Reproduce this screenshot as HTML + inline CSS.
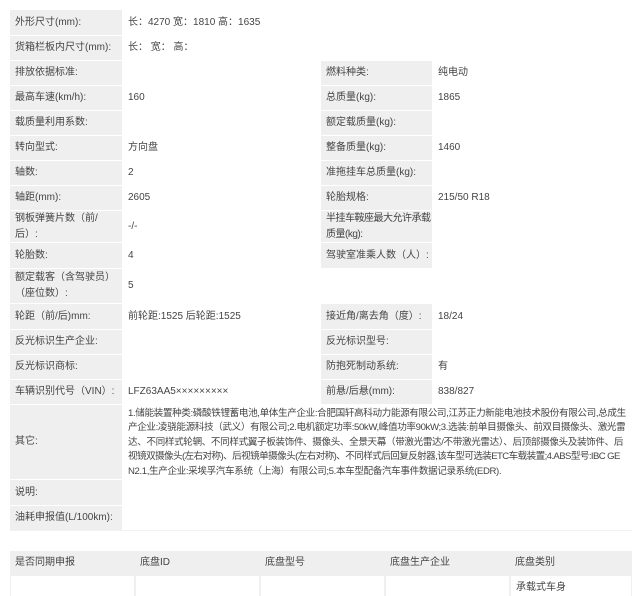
<!DOCTYPE html>
<html><head><meta charset="utf-8"><style>
html,body{margin:0;padding:0;background:#fff;width:640px;height:596px;overflow:hidden}
body{position:relative;font-family:"Liberation Sans","Noto Sans CJK SC",sans-serif;font-size:10px;color:#444}
.c{position:absolute;display:flex;align-items:center;padding-left:5px;box-sizing:border-box;line-height:16px;background:#fff;white-space:nowrap;overflow:hidden}
.l{background:#efefef}
.b{border:1px solid #f0f0f0}
</style></head><body>
<div class="c l" style="left:10px;top:10px;width:112px;height:25px">外形尺寸(mm):</div>
<div class="c" style="left:123px;top:10px;width:509px;height:25px">长：4270 宽：1810 高：1635</div>
<div class="c l" style="left:10px;top:36px;width:112px;height:24px">货箱栏板内尺寸(mm):</div>
<div class="c" style="left:123px;top:36px;width:509px;height:24px">长：&nbsp;宽：&nbsp;高：</div>

<div class="c l" style="left:10px;top:61px;width:112px;height:24px">排放依据标准:</div>
<div class="c" style="left:123px;top:61px;width:197px;height:24px"></div>
<div class="c l" style="left:321px;top:61px;width:111px;height:24px">燃料种类:</div>
<div class="c" style="left:433px;top:61px;width:199px;height:24px">纯电动</div>

<div class="c l" style="left:10px;top:86px;width:112px;height:24px">最高车速(km/h):</div>
<div class="c" style="left:123px;top:86px;width:197px;height:24px">160</div>
<div class="c l" style="left:321px;top:86px;width:111px;height:24px">总质量(kg):</div>
<div class="c" style="left:433px;top:86px;width:199px;height:24px">1865</div>

<div class="c l" style="left:10px;top:111px;width:112px;height:24px">载质量利用系数:</div>
<div class="c" style="left:123px;top:111px;width:197px;height:24px"></div>
<div class="c l" style="left:321px;top:111px;width:111px;height:24px">额定载质量(kg):</div>
<div class="c" style="left:433px;top:111px;width:199px;height:24px"></div>

<div class="c l" style="left:10px;top:136px;width:112px;height:24px">转向型式:</div>
<div class="c" style="left:123px;top:136px;width:197px;height:24px">方向盘</div>
<div class="c l" style="left:321px;top:136px;width:111px;height:24px">整备质量(kg):</div>
<div class="c" style="left:433px;top:136px;width:199px;height:24px">1460</div>

<div class="c l" style="left:10px;top:161px;width:112px;height:24px">轴数:</div>
<div class="c" style="left:123px;top:161px;width:197px;height:24px">2</div>
<div class="c l" style="left:321px;top:161px;width:111px;height:24px">准拖挂车总质量(kg):</div>
<div class="c" style="left:433px;top:161px;width:199px;height:24px"></div>

<div class="c l" style="left:10px;top:186px;width:112px;height:24px">轴距(mm):</div>
<div class="c" style="left:123px;top:186px;width:197px;height:24px">2605</div>
<div class="c l" style="left:321px;top:186px;width:111px;height:24px">轮胎规格:</div>
<div class="c" style="left:433px;top:186px;width:199px;height:24px">215/50 R18</div>

<div class="c l" style="left:10px;top:211px;width:112px;height:31px">钢板弹簧片数（前/<br>后）:</div>
<div class="c" style="left:123px;top:211px;width:197px;height:31px">-/-</div>
<div class="c l" style="left:321px;top:211px;width:111px;height:31px;letter-spacing:-0.5px">半挂车鞍座最大允许承载<br>质量(kg):</div>
<div class="c" style="left:433px;top:211px;width:199px;height:31px"></div>

<div class="c l" style="left:10px;top:243px;width:112px;height:25px">轮胎数:</div>
<div class="c" style="left:123px;top:243px;width:197px;height:25px">4</div>
<div class="c l" style="left:321px;top:243px;width:111px;height:25px">驾驶室准乘人数（人）:</div>
<div class="c" style="left:433px;top:243px;width:199px;height:25px"></div>

<div class="c l" style="left:10px;top:269px;width:112px;height:34px">额定载客（含驾驶员）<br>（座位数）:</div>
<div class="c" style="left:123px;top:269px;width:509px;height:34px">5</div>

<div class="c l" style="left:10px;top:304px;width:112px;height:25px">轮距（前/后)mm:</div>
<div class="c" style="left:123px;top:304px;width:197px;height:25px">前轮距:1525 后轮距:1525</div>
<div class="c l" style="left:321px;top:304px;width:111px;height:25px">接近角/离去角（度）:</div>
<div class="c" style="left:433px;top:304px;width:199px;height:25px">18/24</div>

<div class="c l" style="left:10px;top:330px;width:112px;height:24px">反光标识生产企业:</div>
<div class="c" style="left:123px;top:330px;width:197px;height:24px"></div>
<div class="c l" style="left:321px;top:330px;width:111px;height:24px">反光标识型号:</div>
<div class="c" style="left:433px;top:330px;width:199px;height:24px"></div>

<div class="c l" style="left:10px;top:355px;width:112px;height:24px">反光标识商标:</div>
<div class="c" style="left:123px;top:355px;width:197px;height:24px"></div>
<div class="c l" style="left:321px;top:355px;width:111px;height:24px">防抱死制动系统:</div>
<div class="c" style="left:433px;top:355px;width:199px;height:24px">有</div>

<div class="c l" style="left:10px;top:380px;width:112px;height:24px">车辆识别代号（VIN）:</div>
<div class="c" style="left:123px;top:380px;width:197px;height:24px">LFZ63AA5×××××××××</div>
<div class="c l" style="left:321px;top:380px;width:111px;height:24px">前悬/后悬(mm):</div>
<div class="c" style="left:433px;top:380px;width:199px;height:24px">838/827</div>

<div class="c l" style="left:10px;top:405px;width:112px;height:74px">其它:</div>
<div class="c" style="left:123px;top:405px;width:509px;height:74px;align-items:flex-start;padding-top:2px;line-height:14.4px;font-size:9.6px;letter-spacing:-0.38px"><div>1.储能装置种类:磷酸铁锂蓄电池,单体生产企业:合肥国轩高科动力能源有限公司,江苏正力新能电池技术股份有限公司,总成生<br>产企业:凌骁能源科技（武义）有限公司;2.电机额定功率:50kW,峰值功率90kW;3.选装:前单目摄像头、前双目摄像头、激光雷<br>达、不同样式轮辋、不同样式翼子板装饰件、摄像头、全景天幕（带激光雷达/不带激光雷达）、后顶部摄像头及装饰件、后<br><span style="letter-spacing:-0.6px">视镜双摄像头(左右对称)、后视镜单摄像头(左右对称)、不同样式后回复反射器,该车型可选装ETC车载装置;4.ABS型号:IBC GE</span><br>N2.1,生产企业:采埃孚汽车系统（上海）有限公司;5.本车型配备汽车事件数据记录系统(EDR).</div></div>

<div class="c l" style="left:10px;top:480px;width:112px;height:25px">说明:</div>
<div class="c" style="left:123px;top:480px;width:509px;height:25px"></div>
<div class="c l" style="left:10px;top:506px;width:112px;height:24px">油耗申报值(L/100km):</div>
<div class="c" style="left:123px;top:506px;width:509px;height:24px"></div>
<div style="position:absolute;left:10px;top:530px;width:622px;height:1px;background:#f2f2f2"></div>

<div class="c l" style="left:10px;top:551px;width:125px;height:24px">是否同期申报</div>
<div class="c l" style="left:135px;top:551px;width:125px;height:24px">底盘ID</div>
<div class="c l" style="left:260px;top:551px;width:125px;height:24px">底盘型号</div>
<div class="c l" style="left:385px;top:551px;width:125px;height:24px">底盘生产企业</div>
<div class="c l" style="left:510px;top:551px;width:122px;height:24px">底盘类别</div>
<div class="c b" style="left:10px;top:575px;width:125px;height:26px"></div>
<div class="c b" style="left:135px;top:575px;width:125px;height:26px"></div>
<div class="c b" style="left:260px;top:575px;width:125px;height:26px"></div>
<div class="c b" style="left:385px;top:575px;width:125px;height:26px"></div>
<div class="c b" style="left:510px;top:575px;width:122px;height:26px;align-items:flex-start;padding-top:4px">承载式车身</div>
</body></html>
